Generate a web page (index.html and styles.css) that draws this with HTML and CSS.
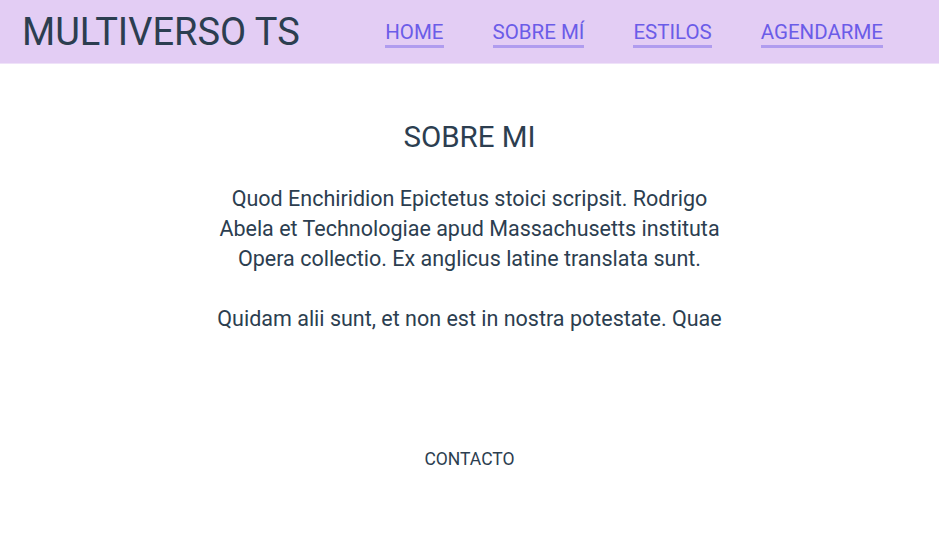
FILE: index.html
```html
<!DOCTYPE html>
<html lang="es">
<head>
<meta charset="utf-8">
<title>Multiverso TS</title>
<link rel="stylesheet" href="styles.css">
</head>
<body>
<header class="header">
  <h1 class="brand">MULTIVERSO TS</h1>
  <nav class="nav">
    <a class="nav-link" href="#">HOME</a>
    <a class="nav-link" href="#">SOBRE MÍ</a>
    <a class="nav-link" href="#">ESTILOS</a>
    <a class="nav-link" href="#">AGENDARME</a>
  </nav>
</header>
<main class="main">
  <section class="about">
    <h2 class="about-title">SOBRE MI</h2>
    <div class="about-text">
      <p>Quod Enchiridion Epictetus stoici scripsit. Rodrigo Abela et Technologiae apud Massachusetts instituta Opera collectio. Ex anglicus latine translata sunt.</p>
      <p>Quidam alii sunt, et non est in nostra potestate. Quae</p>
    </div>
  </section>
  <footer class="footer">CONTACTO</footer>
</main>
</body>
</html>
```
FILE: styles.css
```css
* { box-sizing: border-box; }
html, body { margin: 0; padding: 0; }
body {
  font-family: Roboto, "Liberation Sans", sans-serif;
  color: #2c3e50;
  background: #ffffff;
}
.header {
  height: 64px;
  background: #e3cdf4;
  border-bottom: 1px solid #efe2f9;
  display: flex;
  align-items: center;
  justify-content: space-between;
  padding: 0 56px 0 22px;
}
.brand {
  margin: 0;
  font-size: 38px;
  font-weight: 400;
  color: #2c3e50;
}
.nav {
  display: flex;
  gap: 49px;
  padding-top: 4px;
}
.nav-link {
  font-size: 20.5px;
  color: #6b5ce8;
  text-decoration: none;
  border-bottom: 3px solid #b09cef;
  line-height: 24px;
  padding-bottom: 1px;
}
.main {
  display: flex;
  flex-direction: column;
  align-items: center;
}
.about {
  width: 512px;
  text-align: center;
  padding-top: 53px;
}
.about-title {
  margin: 0 0 27px;
  font-size: 29.5px;
  font-weight: 400;
  line-height: 40px;
}
.about-text {
  font-size: 21.5px;
  line-height: 30px;
}
.about-text p { margin: 0 0 30px; }
.footer {
  margin-top: 85px;
  font-size: 17.5px;
}
```
